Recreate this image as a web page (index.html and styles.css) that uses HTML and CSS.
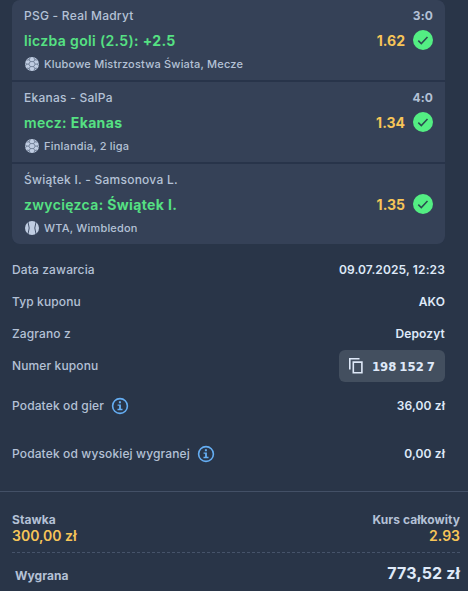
FILE: index.html
```html
<!DOCTYPE html>
<html lang="pl">
<head>
  <meta charset="UTF-8" />
  <meta name="viewport" content="width=device-width, initial-scale=1.0"/>
  <title>Kupon</title>
  <link rel="stylesheet" href="styles.css">
</head>
<body>
  <!-- Shared icons -->
  <svg class="sprite" width="0" height="0">
    <symbol id="check" viewBox="0 0 20 20">
      <circle cx="10" cy="10" r="10" fill="#53ee83"/>
      <path d="M5.3 10.6l3 3 6.2-6.6" fill="none" stroke="#2b4a50" stroke-width="1.5"/>
    </symbol>
    <symbol id="football" viewBox="0 0 14 14">
      <circle cx="7" cy="7" r="7" fill="#c0cde2"/>
      <g fill="none" stroke="#5f6e86" stroke-width="0.8">
        <path d="M5.3 4.6h3.4L10.2 7.1 8.7 9.6H5.3L3.8 7.1z"/>
        <path d="M5.3 4.6L4.2 2.7M8.7 4.6l1.1-1.9M10.2 7.1h2.2M8.7 9.6l1.1 1.9M5.3 9.6l-1.1 1.9M3.8 7.1H1.6"/>
        <path d="M4.2 2.7L5.2.5M4.2 2.7L1.6 3.2M9.8 2.7L8.8.5M9.8 2.7l2.6.5M12.4 7.1l1.3-1.4M12.4 7.1l1 1.6M9.8 11.5l2.2-.4M9.8 11.5l-.8 2M4.2 11.5L2 11.1M4.2 11.5l.8 2M1.6 7.1L.3 5.7M1.6 7.1l-1 1.6"/>
      </g>
    </symbol>
    <symbol id="tennis" viewBox="0 0 14 14">
      <circle cx="7" cy="7" r="7" fill="#c0cde2"/>
      <path d="M3 1q2.4 6 0 12M11 1q-2.4 6 0 12" fill="none" stroke="#435169" stroke-width="1"/>
    </symbol>
    <symbol id="info" viewBox="0 0 18 18">
      <circle cx="9" cy="9" r="7.4" fill="none" stroke="#65aef3" stroke-width="1.6"/>
      <path d="M7.9 4.3h2v1.9h-2zM6.6 7.4h3.3v4.4h1.6v1.4h-5v-1.4h1.6v-3H6.6z" fill="#65aef3"/>
    </symbol>
  </svg>

  <div class="events">
    <div class="event">
      <div class="match"><span>PSG - Real Madryt</span><span class="score">3:0</span></div>
      <div class="bet">
        <span class="pick">liczba goli (2.5): <b>+2.5</b></span>
        <span class="odds">1.62</span>
        <svg class="check"><use href="#check"/></svg>
      </div>
      <div class="league"><svg class="ball"><use href="#football"/></svg>Klubowe Mistrzostwa Świata, Mecze</div>
    </div>
    <div class="event">
      <div class="match"><span>Ekanas - SalPa</span><span class="score">4:0</span></div>
      <div class="bet">
        <span class="pick">mecz: <b>Ekanas</b></span>
        <span class="odds">1.34</span>
        <svg class="check"><use href="#check"/></svg>
      </div>
      <div class="league"><svg class="ball"><use href="#football"/></svg>Finlandia, 2 liga</div>
    </div>
    <div class="event">
      <div class="match"><span>Świątek I. - Samsonova L.</span></div>
      <div class="bet">
        <span class="pick">zwycięzca: <b>Świątek I.</b></span>
        <span class="odds">1.35</span>
        <svg class="check"><use href="#check"/></svg>
      </div>
      <div class="league"><svg class="ball"><use href="#tennis"/></svg>WTA, Wimbledon</div>
    </div>
  </div>

  <div class="details">
    <div class="row"><span>Data zawarcia</span><span class="value">09.07.2025, 12:23</span></div>
    <div class="row"><span>Typ kuponu</span><span class="value">AKO</span></div>
    <div class="row"><span>Zagrano z</span><span class="value">Depozyt</span></div>
    <div class="row">
      <span>Numer kuponu</span>
      <button class="copy">
        <svg width="14" height="16" viewBox="0 0 14 16" fill="none" stroke="#dfe9f8" stroke-width="1.6">
          <path d="M.8 11.5V.8h9.7"/>
          <path d="M4.3 4.1h8.6v10.6H4.3z"/>
        </svg>
        <span class="number">198 152 7</span>
      </button>
    </div>
    <div class="row tax"><span>Podatek od gier</span><svg class="info"><use href="#info"/></svg><span class="value">36,00 zł</span></div>
    <div class="row tax"><span>Podatek od wysokiej wygranej</span><svg class="info"><use href="#info"/></svg><span class="value">0,00 zł</span></div>
  </div>

  <div class="summary">
    <div class="totals">
      <div>
        <div class="label">Stawka</div>
        <div class="amount">300,00 zł</div>
      </div>
      <div class="right">
        <div class="label">Kurs całkowity</div>
        <div class="amount">2.93</div>
      </div>
    </div>
    <div class="win"><span class="label">Wygrana</span><span class="prize">773,52 zł</span></div>
  </div>
</body>
</html>
```
FILE: styles.css
```css
body {
  margin: 0;
  height: 591px;
  overflow: hidden;
  background: #293548;
  color: #b4c1d6;
  font-family: Inter, "Liberation Sans", sans-serif;
  font-size: 12px;
  font-weight: 500;
  letter-spacing: 0.13px;
}

.sprite {
  display: block;
}

/* Events */
.events {
  display: grid;
  gap: 2px;
  margin: 0 23px 0 12px;
  border-radius: 8px;
  overflow: hidden;
  background: #28344a;
}

.event {
  box-sizing: border-box;
  height: 80px;
  padding: 8px 12px 0;
  background: #354157;
}

.match {
  display: flex;
  justify-content: space-between;
  line-height: 16px;
  letter-spacing: 0.25px;
}

.score {
  font-weight: 700;
  letter-spacing: 0.1px;
}

.bet {
  display: flex;
  align-items: center;
  height: 32px;
  margin-bottom: 1px;
}

.pick {
  flex: 1;
  color: #55e183;
  font-size: 14px;
  font-weight: 600;
  letter-spacing: 0.35px;
}

.pick b {
  font-weight: 700;
}

.odds {
  margin-right: 8px;
  color: #f7c558;
  font-size: 14px;
  font-weight: 700;
  letter-spacing: 0;
}

.check {
  width: 20px;
  height: 20px;
}

.league {
  display: flex;
  align-items: center;
  height: 14px;
  font-size: 11px;
  letter-spacing: 0.2px;
}

.ball {
  width: 14px;
  height: 14px;
  margin: 0 5px 0 1px;
}

/* Details */
.details {
  padding: 10px 23px 13px 12px;
}

.row {
  display: flex;
  align-items: center;
  height: 32px;
}

.row > span {
  padding-bottom: 1px;
}

.row.tax {
  height: 48px;
}

.value {
  margin-left: auto;
  color: #dfe9f8;
  font-weight: 600;
}

.copy {
  display: flex;
  align-items: center;
  box-sizing: border-box;
  width: 106px;
  height: 32px;
  margin-left: auto;
  padding: 0 10px;
  border: none;
  border-radius: 6px;
  background: #434f5f;
  color: #dfe9f8;
  cursor: pointer;
}

.number {
  margin-left: auto;
  font-family: "DejaVu Sans Condensed", "DejaVu Sans", sans-serif;
  font-size: 13px;
  font-stretch: condensed;
  font-weight: 700;
  word-spacing: -1px;
}

.info {
  width: 18px;
  height: 18px;
  margin-left: 7px;
}

/* Summary */
.summary {
  padding: 20px 8px 0 12px;
  border-top: 1px solid #435066;
}

.totals {
  display: flex;
  justify-content: space-between;
  height: 40px;
  border-bottom: 1px dashed #46536a;
}

.right {
  text-align: right;
}

.label {
  font-weight: 700;
  line-height: 16px;
  letter-spacing: 0.05px;
}

.amount {
  color: #f7c558;
  font-size: 14px;
  font-weight: 600;
  line-height: 16px;
  letter-spacing: 0;
}

.win {
  display: flex;
  justify-content: space-between;
  padding: 10px 0 0 3px;
}

.win .label {
  padding-top: 5px;
}

.prize {
  color: #dfe9f8;
  font-size: 16px;
  font-weight: 700;
  line-height: 21px;
}
```
